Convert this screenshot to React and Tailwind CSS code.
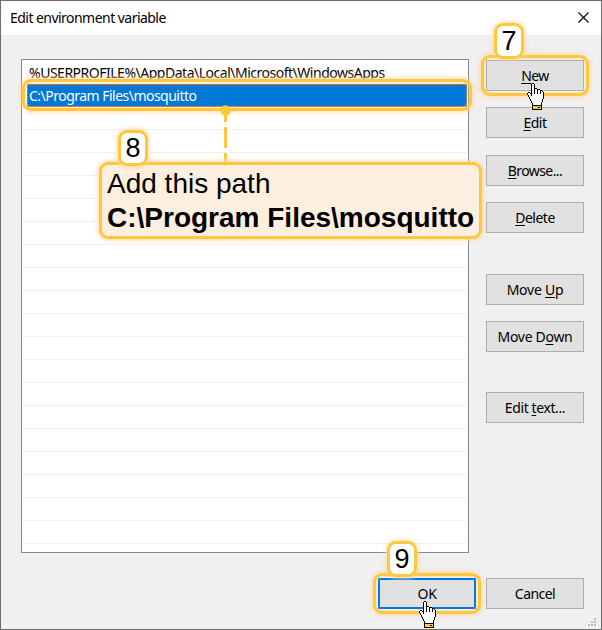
const GOLD = "#ffc83c";

function Hand({ className }) {
  return (
    <svg className={className} width="17" height="27" viewBox="0 0 17 27" shapeRendering="crispEdges">
      <path
        d="M5 1h2v5h3v1h3v1h2v1h1v7h-1v3h-1v3H6v-3H5v-2H4v-2H3v-2H2v-1H1v-3h3v1h1z"
        fill="#fff"
      />
      <path
        d="M5 0h2v1H5zM4 1h1v12H4zM7 1h1v10H7zM8 5h2v1H8zM10 6h1v5h-1zM11 6h2v1h-2zM13 7h1v4h-1zM14 7h1v1h-1zM15 8h1v1h-1zM16 9h1v7h-1zM15 16h1v3h-1zM14 19h1v3h-1zM1 9h2v1H1zM0 10h1v2H0zM3 10h1v1H3zM1 12h1v2H1zM2 14h1v2H2zM3 16h1v2H3zM4 18h1v2H4zM5 20h1v2H5z"
        fill="#000"
      />
      <path d="M5 22h10v5H5z" fill="#000" />
      <path d="M6 23h8v3H6z" fill={GOLD} />
      <path d="M11 24h2v1h-2z" fill="#000" />
    </svg>
  );
}

function Button({ children, text = "tracking-[-0.4px]", border = "border border-[#adadad]", className = "" }) {
  return (
    <button className={`flex h-[31px] w-[98px] shrink-0 items-center justify-center bg-[#e1e1e1] ${border} ${className}`}>
      <span className={`whitespace-nowrap ${text}`}>{children}</span>
    </button>
  );
}

function Key({ children }) {
  return <span className="underline decoration-1 underline-offset-2">{children}</span>;
}

function Ring({ className }) {
  return (
    <div className={`pointer-events-none absolute rounded-[9px] border-3 border-[#ffc83c] shadow-[0_0_5px_1px_#ffd6a6,inset_0_0_3px_#ffd6a6] ${className}`} />
  );
}

function Badge({ children, className }) {
  return (
    <div className={`absolute flex h-9 w-[30px] items-center justify-center rounded-[9px] border-3 border-[#ffc83c] bg-white font-['Liberation_Sans',sans-serif] text-[27px] leading-none shadow-[0_0_5px_1px_#ffd6a6] ${className}`}>
      {children}
    </div>
  );
}

export default function App() {
  return (
    <div className="relative flex h-[630px] w-[602px] flex-col overflow-hidden border border-[#6e6e6e] bg-[#f0f0f0] font-['Noto_Sans','Open_Sans',sans-serif] text-[14px] leading-5 text-black">
      <header className="flex h-[34px] shrink-0 items-center justify-between bg-white pr-3 pl-[9px]">
        <h1 className="tracking-[-0.54px]">Edit environment variable</h1>
        <svg className="-mt-0.5" width="11" height="11" viewBox="0 0 11 11">
          <path d="M.5 .5l10 10M10.5 .5l-10 10" stroke="#000" strokeWidth="1.1" />
        </svg>
      </header>
      <main className="flex gap-[17px] pt-6 pl-5">
        <div className="h-[494px] w-[448px] border border-[#828790] bg-white px-px pt-px">
          <div className="flex h-[23px] items-center border-b border-[#f0f0f0] pt-0.5 pl-1.5">
            <span className="whitespace-nowrap tracking-[-0.49px]">%USERPROFILE%\AppData\Local\Microsoft\WindowsApps</span>
          </div>
          <div className="ml-1 flex h-[23px] items-center border border-dotted border-[#ff8728] bg-[#0078d7] pt-px pl-px text-white">
            <span className="tracking-[-0.52px]">C:\Program Files\mosquitto</span>
          </div>
          {Array.from({ length: 19 }, (_, i) => (
            <div key={i} className="h-[23px] border-b border-[#f0f0f0]" />
          ))}
        </div>
        <div className="flex flex-col pt-px">
          <Button text="tracking-[-0.6px]"><Key>N</Key>ew</Button>
          <Button className="mt-4" text="tracking-[-0.5px]"><Key>E</Key>dit</Button>
          <Button className="mt-[17px]" text="tracking-[-0.6px]"><Key>B</Key>rowse...</Button>
          <Button className="mt-4" text="tracking-[-0.5px]"><Key>D</Key>elete</Button>
          <Button className="mt-[41px]" text="tracking-[-0.25px]">Move <Key>U</Key>p</Button>
          <Button className="mt-4" text="tracking-[-0.3px]">Move D<Key>o</Key>wn</Button>
          <Button className="mt-10">Edit <Key>t</Key>ext...</Button>
        </div>
      </main>
      <footer className="flex justify-end gap-2.5 pt-[25px] pr-[17px]">
        <Button border="border-2 border-[#0078d7]">OK</Button>
        <Button text="tracking-[-0.55px]">Cancel</Button>
      </footer>
      <svg className="absolute right-1 bottom-0.5" width="9" height="9" viewBox="0 0 9 9" fill="#bfbfbf" shapeRendering="crispEdges">
        <path d="M6 0h2v2H6zM3 3h2v2H3zM6 3h2v2H6zM0 6h2v2H0zM3 6h2v2H3zM6 6h2v2H6z" />
      </svg>
      <svg className="absolute -top-px -left-px" width="1" height="630" shapeRendering="crispEdges">
        <path d="M0 120h1v10H0zM0 455h1v2H0z" fill="#7b3d12" />
        <path d="M0 147h1v2H0zM0 436h1v1H0zM0 458h1v1H0zM0 542h1v1H0z" fill="#123f78" />
        <path d="M0 77h1v1H0zM0 325h1v1H0zM0 328h1v1H0zM0 331h1v1H0zM0 381h1v1H0zM0 390h1v1H0zM0 404h1v1H0zM0 413h1v1H0zM0 496h1v1H0zM0 523h1v4H0z" fill="#1c1c1c" />
      </svg>

      <Ring className="top-[78px] left-[21px] h-8 w-[450px]" />
      <Ring className="top-[54px] left-[480px] h-[41px] w-[108px]" />
      <Ring className="top-[572px] left-[372px] h-[41px] w-[108px]" />

      <svg className="absolute top-[104px] left-[219px]" width="11" height="58" viewBox="0 0 11 58">
        <circle cx="5.5" cy="5.5" r="5.2" fill={GOLD} />
        <path d="M5.5 5V17M5.5 22V43M5.5 48V58" stroke={GOLD} strokeWidth="3" />
      </svg>
      <div className="absolute top-[161px] left-[98px] h-[77px] w-[383px] rounded-[9px] border-3 border-[#ffc83c] bg-[#fdefdf] pt-0.5 pl-[5px] font-['Liberation_Sans',sans-serif] text-[28px] leading-[34px] whitespace-nowrap shadow-[0_0_5px_1px_#ffd6a6]">
        <p>Add this path</p>
        <p className="font-bold">C:\Program Files\mosquitto</p>
      </div>
      <Badge className="top-[22px] left-[493px]">7</Badge>
      <Badge className="top-[129px] left-[117px]">8</Badge>
      <Badge className="top-[540px] left-[386px]">9</Badge>
      <Hand className="absolute top-[82px] left-[526px]" />
      <Hand className="absolute top-[600px] left-[418px]" />
    </div>
  );
}
